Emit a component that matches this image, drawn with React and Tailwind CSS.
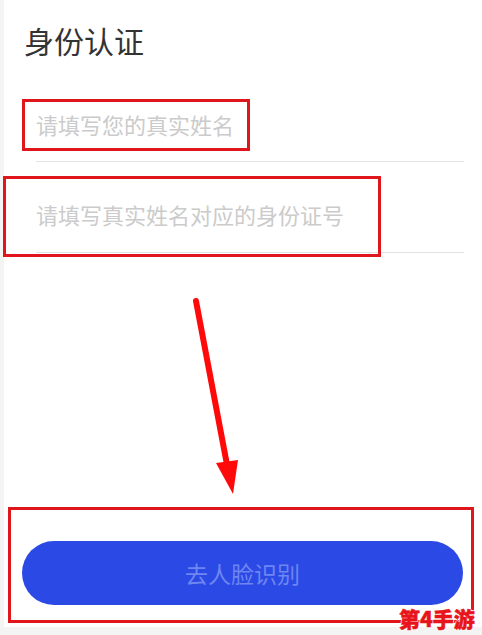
import React from "react";

const font = { fontFamily: '"Noto Sans CJK SC", "Noto Sans", sans-serif' };

export default function App() {
  return (
    <div
      className="relative w-[482px] h-[635px] overflow-hidden bg-[#f4f4f4] flex"
      style={font}
    >
      <div className="ml-[4px] flex-1 h-[627px] bg-white flex flex-col">
        <h1 className="pt-[22px] pl-[20px] text-[30px] leading-[36px] text-[#333333] font-normal">
          身份认证
        </h1>
        <div className="ml-[32px] w-[428px] flex flex-col">
          <div className="pt-[51px] pb-[22px] border-b border-[#e2e2e2] text-[22px] leading-[30px] text-[#cbcbcb]">
            请填写您的真实姓名
          </div>
          <div className="pt-[37px] pb-[23px] border-b border-[#e2e2e2] text-[22px] leading-[30px] text-[#cbcbcb]">
            请填写真实姓名对应的身份证号
          </div>
        </div>
        <button className="mt-[288px] ml-[18px] w-[441px] h-[64px] rounded-full bg-[#2b49e5] text-[#6d86f1] text-[23px] leading-[30px] flex items-center justify-center">
          去人脸识别
        </button>
      </div>

      {/* annotation boxes */}
      <div className="absolute left-[22px] top-[99px] w-[228px] h-[52px] border-[3px] border-[#e0161d]" />
      <div className="absolute left-[3px] top-[176px] w-[378px] h-[81px] border-[3px] border-[#e0161d]" />
      <div className="absolute left-[8px] top-[507px] w-[466px] h-[116px] border-[3px] border-[#e0161d]" />

      {/* arrow */}
      <svg
        className="absolute left-0 top-0"
        width="482"
        height="635"
        viewBox="0 0 482 635"
      >
        <line
          x1="196"
          y1="301"
          x2="228"
          y2="470"
          stroke="#ff0a0a"
          strokeWidth="6"
          strokeLinecap="round"
        />
        <polygon points="216,463 238,460 233,494" fill="#ff0a0a" />
      </svg>

      {/* watermark */}
      <div
        className="absolute left-[399px] top-[604px] text-[21px] leading-[28px] font-black text-[#e8141b]"
        style={{
          ...font,
          WebkitTextStroke: "0.5px #e8141b",
          textShadow:
            "1px 0 0 #fff, -1px 0 0 #fff, 0 1px 0 #fff, 0 -1px 0 #fff",
        }}
      >
        第4手游
      </div>
    </div>
  );
}
